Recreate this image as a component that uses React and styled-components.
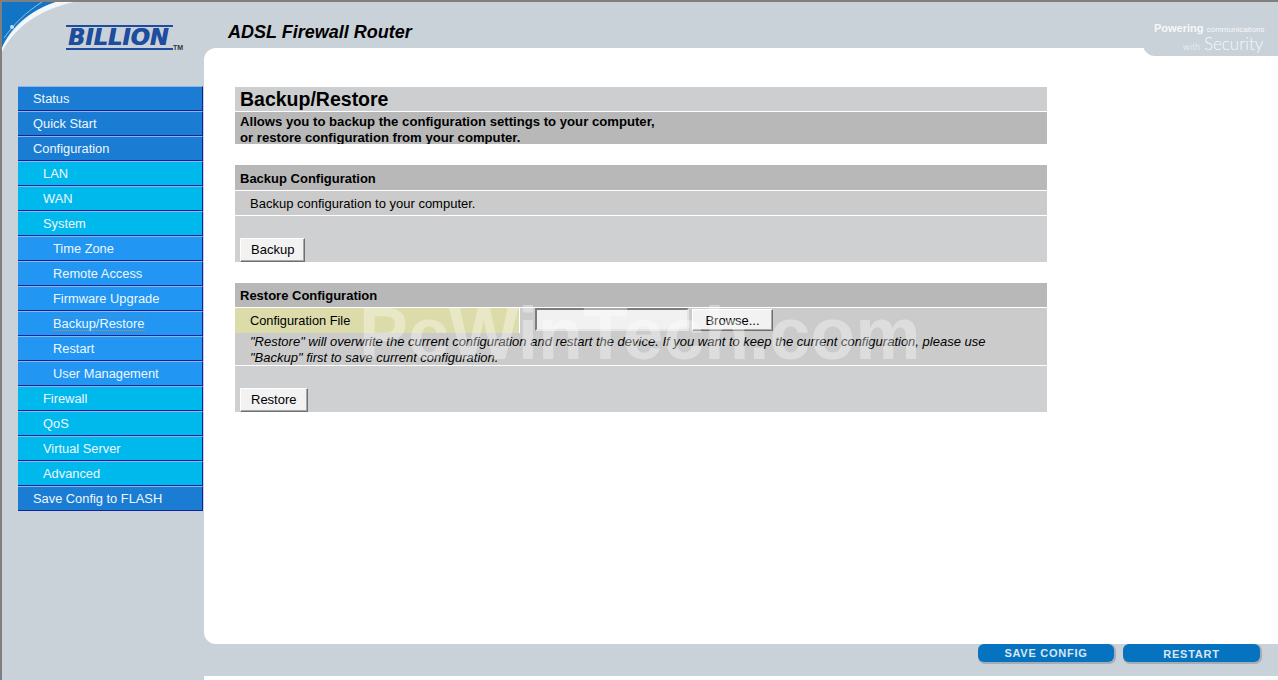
import React from 'react';
import styled, { createGlobalStyle } from 'styled-components';

const GlobalStyle = createGlobalStyle`
  html, body {
    margin: 0;
    padding: 0;
    background: #fff;
    overflow: hidden;
  }
  * { box-sizing: border-box; }
`;

const Page = styled.div`
  position: relative;
  width: 1278px;
  height: 680px;
  display: grid;
  grid-template-columns: 202px 1fr;
  grid-template-rows: 46px 596px 32px 4px;
  background: #c9d1d9;
  border-top: 2px solid #7f7f7f;
  border-left: 2px solid #7f7f7f;
  font-family: "Liberation Sans", Arial, sans-serif;
  overflow: hidden;
`;

const LogoCell = styled.div`
  position: relative;
  padding: 23px 0 0 64px;
`;

const Corner = styled.svg`
  position: absolute;
  left: 0;
  top: 0;
`;

const LogoMark = styled.div`
  width: 107px;
  height: 25px;
  border-top: 2px solid #1f4d9e;
  border-bottom: 2px solid #1f4d9e;
  padding-left: 2px;
  color: #1f4d9e;
  font-family: "DejaVu Sans", "Liberation Sans", sans-serif;
  font-size: 22.5px;
  line-height: 21px;
  font-weight: bold;
  font-style: italic;
  text-shadow: 0.6px 0 0 #1f4d9e;
  white-space: nowrap;
`;

const Tm = styled.span`
  position: absolute;
  left: 171px;
  top: 42px;
  font-size: 7px;
  font-weight: bold;
  color: #30363c;
`;

const HeaderCell = styled.div`
  padding: 20px 0 0 24px;
`;

const Title = styled.div`
  font-size: 18px;
  line-height: 20px;
  font-weight: bold;
  font-style: italic;
  color: #000;
`;

const Tagline = styled.div`
  position: absolute;
  top: -2px;
  right: 0;
  width: 135px;
  height: 56px;
  background: #c9d1d9;
  border-bottom-left-radius: 12px;
  color: #f6f8f9;
  padding: 23px 0 0 11px;
`;

const TagTop = styled.div`
  font-size: 8px;
  line-height: 11px;
  white-space: nowrap;
  b { font-size: 11px; margin-right: 1px; }
`;

const TagBottom = styled.div`
  font-family: Lato, "Liberation Sans", sans-serif;
  font-weight: 300;
  font-size: 9px;
  line-height: 18px;
  padding-left: 29px;
  white-space: nowrap;
  span { font-size: 17px; margin-left: 4px; }
`;

const Sidebar = styled.nav`
  grid-row: 2 / 5;
  padding: 38px 0 0 16px;
`;

const colors = {
  0: '#1a7dd3',
  1: '#00b9ec',
  2: '#2196f3',
};

const MenuItem = styled.div`
  width: 185px;
  height: 25px;
  padding-left: ${(p) => 15 + p.$level * 10}px;
  background: ${(p) => colors[p.$level]};
  border-top: 1px solid #8fb4ee;
  border-bottom: 1px solid #12239a;
  border-right: 1px solid #12239a;
  color: #eef6ff;
  font-size: 12.85px;
  line-height: 23px;
  white-space: nowrap;
`;

const ActiveLabel = styled.span`
  display: inline-block;
  margin-left: -1px;
  border: 1px dotted rgba(240, 128, 32, 0.3);
  border-bottom-color: #f08020;
  line-height: 13px;
`;

const Main = styled.main`
  background: #fff;
  border-radius: 12px 0 0 12px;
  padding: 39px 0 0 31px;
`;

const Panel = styled.div`
  width: 812px;
  margin-bottom: 21px;
  display: flex;
  flex-direction: column;
  gap: 1px;
`;

const PageHeading = styled.div`
  height: 24px;
  background: #cdcecf;
  padding-left: 5px;
  font-size: 19.5px;
  line-height: 25px;
  font-weight: bold;
  color: #000;
`;

const Intro = styled.div`
  height: 32px;
  background: #b8b8b8;
  padding: 2px 0 0 5px;
  font-size: 13.15px;
  line-height: 16px;
  font-weight: bold;
  color: #000;
  overflow: hidden;
`;

const SectionHead = styled.div`
  height: ${(p) => p.$height}px;
  background: #b8b8b8;
  padding-left: 5px;
  font-size: 13px;
  line-height: ${(p) => p.$height + 2}px;
  font-weight: bold;
  color: #000;
`;

const Row = styled.div`
  height: 24px;
  background: #cbcbcb;
  padding-left: 15px;
  font-size: 13px;
  line-height: 26px;
  color: #000;
`;

const FileRow = styled.div`
  height: 24px;
  display: grid;
  grid-template-columns: 284px 1fr;
  gap: 1px;
  font-size: 12.8px;
  color: #000;
`;

const FileLabel = styled.div`
  background: #dcdcaa;
  padding-left: 15px;
  line-height: 25px;
`;

const FileControl = styled.div`
  background: #cbcbcb;
  display: flex;
  align-items: flex-start;
  padding: 0 0 0 15px;
`;

const FileInput = styled.div`
  width: 154px;
  height: 23px;
  background: #f1f1f1;
  border: 2px solid;
  border-color: #7c7c7c #e4e4e4 #e4e4e4 #7c7c7c;
`;

const Note = styled.div`
  height: 32px;
  background: #cbcbcb;
  padding: 1px 0 0 15px;
  font-size: 13px;
  line-height: 16px;
  font-style: italic;
  color: #000;
  white-space: nowrap;
  overflow: hidden;
`;

const Actions = styled.div`
  height: 46px;
  background: #cfd0d2;
  padding: 22px 0 0 5px;
`;

const Button = styled.button`
  height: 24px;
  padding: 0 10px 2px;
  margin: 0;
  background: #f2f2f2;
  border: 1px solid;
  border-color: #fff #6f6f6f #6f6f6f #fff;
  box-shadow: inset -1px -1px 0 #a8a8a8;
  font-family: "Liberation Sans", Arial, sans-serif;
  font-size: 13px;
  color: #000;
`;

const BrowseButton = styled(Button)`
  width: 81px;
  height: 22px;
  padding: 0;
  margin: 1px 0 0 3px;
`;

const Watermark = styled.div`
  position: absolute;
  left: 357px;
  top: 292px;
  font-size: 73.5px;
  line-height: 80px;
  font-weight: bold;
  color: rgba(255, 255, 255, 0.35);
  white-space: nowrap;
  pointer-events: none;
`;

const Footer = styled.div`
  display: flex;
  justify-content: flex-end;
  gap: 9px;
  padding-right: 18px;
`;

const FooterButton = styled.div`
  width: ${(p) => p.$width}px;
  height: 18px;
  background: #0673c0;
  border-radius: 6px;
  box-shadow: 1px 1px 0 1px #a3adb6;
  color: #d9e6f2;
  text-align: center;
  font-size: 11px;
  line-height: ${(p) => p.$line}px;
  font-weight: bold;
  letter-spacing: 0.75px;
`;

const BottomFill = styled.div`
  background: #fff;
`;

const MENU = [
  ['Status', 0],
  ['Quick Start', 0],
  ['Configuration', 0],
  ['LAN', 1],
  ['WAN', 1],
  ['System', 1],
  ['Time Zone', 2],
  ['Remote Access', 2],
  ['Firmware Upgrade', 2],
  ['Backup/Restore', 2, true],
  ['Restart', 2],
  ['User Management', 2],
  ['Firewall', 1],
  ['QoS', 1],
  ['Virtual Server', 1],
  ['Advanced', 1],
  ['Save Config to FLASH', 0],
];

const App = () => {
  return (
    <Page>
      <GlobalStyle />
      <LogoCell>
        <Corner width="76" height="50" viewBox="0 0 76 50">
          <path d="M0 46 C 8 26, 28 8, 54 0 L 0 0 Z" fill="#1274c4" />
          <path d="M0 50 C 12 26, 36 8, 72 0 L 54 0 C 28 8, 8 28, 0 46 Z" fill="#f4f7f9" />
          <path d="M2 36 C 12 22, 24 10, 40 0" fill="none" stroke="#8cc0e8" strokeWidth="1" />
          <circle cx="10" cy="25" r="2" fill="#bfe2f7" />
        </Corner>
        <LogoMark>BILLION</LogoMark>
        <Tm>TM</Tm>
      </LogoCell>
      <HeaderCell>
        <Title>ADSL Firewall Router</Title>
      </HeaderCell>
      <Sidebar>
        {MENU.map(([label, level, active]) => (
          <MenuItem key={label} $level={level}>
            {active ? <ActiveLabel>{label}</ActiveLabel> : label}
          </MenuItem>
        ))}
      </Sidebar>
      <Main>
        <Panel>
          <PageHeading>Backup/Restore</PageHeading>
          <Intro>
            Allows you to backup the configuration settings to your computer,
            <br />
            or restore configuration from your computer.
          </Intro>
        </Panel>
        <Panel>
          <SectionHead $height={25}>Backup Configuration</SectionHead>
          <Row>Backup configuration to your computer.</Row>
          <Actions>
            <Button>Backup</Button>
          </Actions>
        </Panel>
        <Panel>
          <SectionHead $height={24}>Restore Configuration</SectionHead>
          <FileRow>
            <FileLabel>Configuration File</FileLabel>
            <FileControl>
              <FileInput />
              <BrowseButton>Browse...</BrowseButton>
            </FileControl>
          </FileRow>
          <Note>
            "Restore" will overwrite the current configuration and restart the device. If you want to keep the current configuration, please use
            <br />
            "Backup" first to save current configuration.
          </Note>
          <Actions>
            <Button>Restore</Button>
          </Actions>
        </Panel>
      </Main>
      <Footer>
        <FooterButton $width={136} $line={19}>SAVE CONFIG</FooterButton>
        <FooterButton $width={137} $line={21}>RESTART</FooterButton>
      </Footer>
      <BottomFill />
      <Watermark>PcWinTech.com</Watermark>
      <Tagline>
        <TagTop>
          <b>Powering</b> communications
        </TagTop>
        <TagBottom>
          with<span>Security</span>
        </TagBottom>
      </Tagline>
    </Page>
  );
};

export default App;
